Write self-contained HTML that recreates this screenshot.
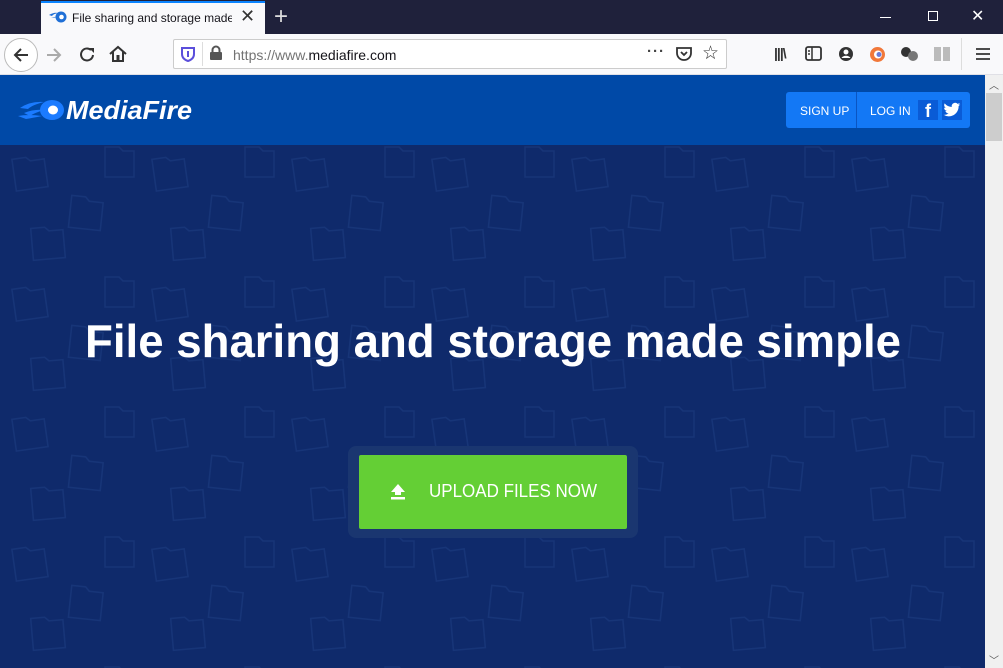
<!DOCTYPE html>
<html><head><meta charset="utf-8"><style>
*{margin:0;padding:0;box-sizing:border-box}
body{width:1003px;height:668px;overflow:hidden;position:relative;font-family:"Liberation Sans",sans-serif;background:#0f2a6b}
.abs{position:absolute}
</style></head><body>
<!-- tab bar -->
<div class="abs" style="left:0;top:0;width:1003px;height:34px;background:#1f213b"></div>
<div class="abs" style="left:41px;top:1px;width:224px;height:33px;background:#f9f9fb;border-top:2px solid #0a84ff"></div>
<svg class="abs" style="left:49px;top:11px" width="18" height="12" viewBox="0 0 18 12"><path d="M0 4 Q5 1 9 2 Q4 3 3 5Z M2 7 Q7 5 10 6 Z" fill="#1f6fd6"/><circle cx="12" cy="6" r="5.5" fill="#1f6fd6"/><circle cx="12.5" cy="6" r="2.3" fill="#fff"/></svg>
<div class="abs" style="left:72px;top:11px;font-size:12px;color:#15141a;width:160px;white-space:nowrap;overflow:hidden">File sharing and storage made s</div>
<div class="abs" style="left:240px;top:6px;font-size:18px;color:#333">✕</div>
<div class="abs" style="left:274px;top:3px;font-size:24px;color:#ddd;font-weight:300">+</div>
<div class="abs" style="left:880px;top:17px;width:11px;height:1px;background:#fff"></div>
<div class="abs" style="left:928px;top:11px;width:10px;height:10px;border:1px solid #fff"></div>
<div class="abs" style="left:971px;top:6px;font-size:16px;color:#fff">✕</div>
<!-- toolbar -->
<div class="abs" style="left:0;top:34px;width:1003px;height:41px;background:#f9f9fb;border-bottom:1px solid #e0e0e6"></div>
<div class="abs" style="left:4px;top:38px;width:34px;height:34px;border:1px solid #bbb;border-radius:50%;background:#fff"></div>
<svg class="abs" style="left:11px;top:45px" width="20" height="20"><path d="M17 10H4M10 4L4 10L10 16" stroke="#333" stroke-width="2" fill="none"/></svg>
<svg class="abs" style="left:44px;top:45px" width="20" height="20"><path d="M3 10H16M10 4L16 10L10 16" stroke="#aaa" stroke-width="2" fill="none"/></svg>
<svg class="abs" style="left:78px;top:45px" width="20" height="20"><path d="M15 10A6 6 0 1 1 13 5" stroke="#333" stroke-width="2" fill="none"/><path d="M11 3H16V8Z" fill="#333"/></svg>
<svg class="abs" style="left:108px;top:44px" width="20" height="20"><path d="M2 10L10 3L18 10M5 8V17H15V8" stroke="#333" stroke-width="2" fill="none"/><rect x="8.5" y="11" width="3" height="6" fill="#333"/></svg>
<div class="abs" style="left:173px;top:39px;width:554px;height:30px;background:#fff;border:1px solid #ccc;border-radius:2px"></div>
<svg class="abs" style="left:180px;top:46px" width="16" height="16"><path d="M2 2H14V8Q14 13 8 15Q2 13 2 8Z" fill="none" stroke="#5b4fdb" stroke-width="2"/><rect x="7" y="5" width="2" height="6" fill="#5b4fdb"/></svg>
<div class="abs" style="left:202px;top:42px;width:1px;height:24px;background:#ddd"></div>
<svg class="abs" style="left:209px;top:45px" width="14" height="16"><path d="M3.5 7V5A3.5 3.5 0 0 1 10.5 5V7" stroke="#555" stroke-width="2" fill="none"/><rect x="1" y="7" width="12" height="8" rx="1" fill="#555"/></svg>
<div class="abs" style="left:233px;top:47px;font-size:14px;color:#737373">https://www.<span style="color:#15141a">mediafire.com</span></div>
<div class="abs" style="left:647px;top:43px;font-size:15px;color:#444;letter-spacing:1px;font-weight:bold">···</div>
<svg class="abs" style="left:675px;top:45px" width="18" height="18"><path d="M2 3H16V8A7 7 0 0 1 2 8Z" stroke="#333" stroke-width="1.8" fill="none"/><path d="M6 7L9 10L12 7" stroke="#333" stroke-width="1.8" fill="none"/></svg>
<div class="abs" style="left:702px;top:42px;font-size:19px;color:#333">☆</div>
<div class="abs" style="left:774px;top:45px;font-size:14px;color:#333;font-weight:bold;letter-spacing:-1px">|||\</div>
<svg class="abs" style="left:805px;top:46px" width="18" height="16"><rect x="1" y="1" width="15" height="13" rx="2" stroke="#333" stroke-width="1.8" fill="none"/><path d="M7 1V14M3 5H5M3 8H5" stroke="#333" stroke-width="1.5"/></svg>
<svg class="abs" style="left:838px;top:46px" width="16" height="16"><circle cx="8" cy="8" r="7" fill="#333"/><circle cx="8" cy="6" r="2.5" fill="#fff"/><path d="M3.5 12A5 4 0 0 1 12.5 12" fill="#fff"/></svg>
<svg class="abs" style="left:869px;top:46px" width="17" height="17"><circle cx="8.5" cy="8.5" r="7.5" fill="#f1783a"/><circle cx="9" cy="8.5" r="4" fill="#fff"/><circle cx="10" cy="8.5" r="2.5" fill="#6b7bd6"/></svg>
<svg class="abs" style="left:900px;top:46px" width="20" height="16"><circle cx="6" cy="6" r="5" fill="#333"/><circle cx="13" cy="10" r="5" fill="#777"/></svg>
<svg class="abs" style="left:933px;top:46px" width="18" height="16"><path d="M1 1H8V15H1ZM10 1H17V15H10Z" fill="#bbb"/></svg>
<div class="abs" style="left:961px;top:38px;width:1px;height:32px;background:#ddd"></div>
<svg class="abs" style="left:976px;top:47px" width="14" height="14"><path d="M0 2H14M0 7H14M0 12H14" stroke="#333" stroke-width="1.8"/></svg>
<!-- page header -->
<div class="abs" style="left:0;top:75px;width:985px;height:70px;background:#0049a7"></div>
<svg class="abs" style="left:18px;top:97px" width="46" height="26" viewBox="0 0 46 26"><path d="M2 11 Q12 4 26 5 Q14 8 10 12Z M6 16 Q16 12 26 13 Q16 16 12 19Z M0 19 Q10 17 24 19 Q14 21 8 22Z" fill="#1b7bff"/><ellipse cx="34" cy="13" rx="12" ry="10" fill="#1b7bff"/><ellipse cx="35" cy="13" rx="5" ry="4.5" fill="#fff"/></svg>
<svg class="abs" style="left:64px;top:92px" width="132" height="36"><text x="2" y="27" textLength="126" lengthAdjust="spacingAndGlyphs" font-family="Liberation Sans,sans-serif" font-weight="bold" font-style="italic" font-size="26" fill="#fff">MediaFire</text></svg>
<div class="abs" style="left:786px;top:92px;width:184px;height:36px;background:#1378f5;border-radius:3px"></div>
<div class="abs" style="left:856px;top:92px;width:1px;height:36px;background:#0a55c2"></div>
<div class="abs" style="left:800px;top:104px;font-size:12px;color:#fff">SIGN UP</div>
<div class="abs" style="left:870px;top:104px;font-size:12px;color:#fff">LOG IN</div>
<div class="abs" style="left:918px;top:100px;width:20px;height:20px;background:#0a5bd6;color:#fff;font-weight:bold;font-size:18px;text-align:center;line-height:22px">f</div>
<div class="abs" style="left:942px;top:100px;width:20px;height:20px;background:#0a5bd6"></div>
<svg class="abs" style="left:943px;top:102px" width="18" height="16" viewBox="0 0 24 20"><path d="M23 2.5a9 9 0 0 1-2.6.7A4.6 4.6 0 0 0 22.4.7a9 9 0 0 1-2.9 1.1A4.6 4.6 0 0 0 11.7 6 13 13 0 0 1 2.2 1.2a4.6 4.6 0 0 0 1.4 6.1A4.6 4.6 0 0 1 1.5 6.7 4.6 4.6 0 0 0 5.2 11.2a4.6 4.6 0 0 1-2 .1 4.6 4.6 0 0 0 4.3 3.2A9.2 9.2 0 0 1 .7 16.4 13 13 0 0 0 7.7 18.5c8.5 0 13.1-7 13.1-13.1v-.6A9.3 9.3 0 0 0 23 2.5z" fill="#fff"/></svg>
<!-- hero pattern -->
<svg class="abs" style="left:0;top:145px" width="985" height="523">
<defs><pattern id="p" width="140" height="130" patternUnits="userSpaceOnUse">
<g fill="none" stroke="#173578" stroke-width="1.5">
<path d="M14 12H28L32 16H46V44H14Z" transform="rotate(-8 30 28)"/><path d="M70 52H84L88 56H102V84H70Z" transform="rotate(6 86 68)"/><path d="M105 2H119L123 6H134V32H105Z"/><path d="M32 82H46L50 86H64V114H32Z" transform="rotate(-5 48 98)"/>
</g></pattern></defs>
<rect width="985" height="523" fill="#0f2a6b"/><rect width="985" height="523" fill="url(#p)"/></svg>
<svg class="abs" style="left:0;top:300px" width="985" height="80"><text x="85" y="57" textLength="816" lengthAdjust="spacingAndGlyphs" font-family="Liberation Sans,sans-serif" font-weight="bold" font-size="46" fill="#fff">File sharing and storage made simple</text></svg>
<div class="abs" style="left:348px;top:446px;width:290px;height:92px;background:#1a3670;border-radius:8px"></div>
<div class="abs" style="left:359px;top:455px;width:268px;height:74px;background:#64cf35;border-radius:2px"></div>
<svg class="abs" style="left:390px;top:483px" width="16" height="17"><path d="M8 1L15 9H11V12H5V9H1Z" fill="#fff"/><rect x="1" y="14" width="14" height="2.5" fill="#fff"/></svg>
<svg class="abs" style="left:428px;top:478px" width="180" height="28"><text x="1" y="19" textLength="168" lengthAdjust="spacingAndGlyphs" font-family="Liberation Sans,sans-serif" font-size="18" fill="#fff">UPLOAD FILES NOW</text></svg>
<!-- scrollbar -->
<div class="abs" style="left:985px;top:75px;width:18px;height:593px;background:#f0f0f0"></div>
<div class="abs" style="left:986px;top:93px;width:16px;height:48px;background:#cdcdcd"></div>
<div class="abs" style="left:989px;top:77px;font-size:10px;color:#555">︿</div>
<div class="abs" style="left:989px;top:652px;font-size:10px;color:#555">﹀</div>
</body></html>
